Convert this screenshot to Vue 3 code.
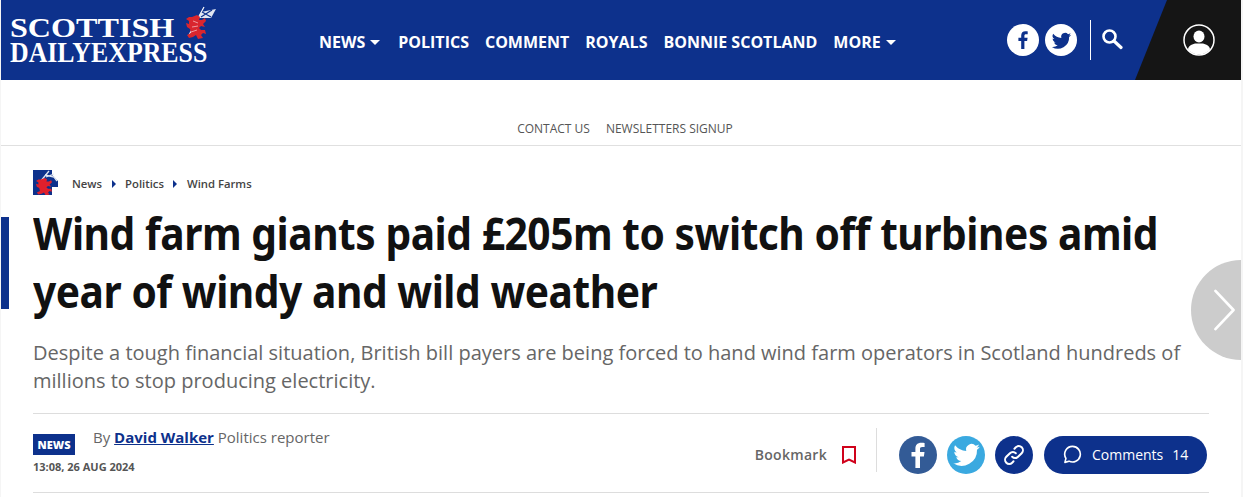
<script setup>
const navItems = [
  { label: 'NEWS', caret: true },
  { label: 'POLITICS' },
  { label: 'COMMENT' },
  { label: 'ROYALS' },
  { label: 'BONNIE SCOTLAND' },
  { label: 'MORE', caret: true }
]
const lion = 'M6 2L11 0 14 2 13 5 16 5 19 3 20 6 17 9 19 12 15 11 13 13 15 15 19 15 20 19 17 18 15 20 17 23 12 24 10 20 7 22 3 23 1 20 5 18 4 14 1 12 0 8 3 9 3 6 0 4 3 2z'
</script>

<template>
  <div class="page">
    <header class="masthead">
      <div class="logo">
        <div class="logo-text">
          <span class="logo-top">SCOTTISH</span>
          <span class="logo-bottom">DAILY EXPRESS</span>
        </div>
        <svg class="logo-lion" viewBox="0 0 34 36" width="34" height="36">
          <path d="M5 32L20 4" stroke="#fff" stroke-width="1.200"/>
          <path d="M17 9L32 6 27 15 14 15z" fill="#dfe5f1"/>
          <path d="M18 9l9 5M28 7l-11 7" stroke="#0d318c" stroke-width="1.200"/>
          <path :d="lion" fill="#d9262e" transform="translate(2 12)"/>
          <path d="M9 18l5 2M8 24l6-1M7 29l6-2" stroke="#f4b8bb" stroke-width=".8"/>
        </svg>
      </div>
      <nav class="nav">
        <a v-for="item in navItems" :key="item.label" class="nav-link">
          {{ item.label }}<i v-if="item.caret" class="caret"></i>
        </a>
      </nav>
      <div class="tools">
        <span class="round-white">
          <svg viewBox="0 0 32 32" width="32" height="32"><path d="M17.400 25v-8h2.700l.5-3.200h-3.200v-2c0-.9.3-1.500 1.600-1.500h1.700V7.400c-.3 0-1.300-.1-2.400-.1-2.500 0-4.100 1.500-4.100 4.200v2.300h-2.800V17h2.800v8z" fill="#0d318c"/></svg>
        </span>
        <span class="round-white">
          <svg viewBox="0 0 24 24" width="21" height="21"><path d="M23 5.500c-.8.400-1.700.6-2.600.7.900-.6 1.600-1.400 2-2.500-.9.500-1.800.9-2.900 1.100A4.500 4.500 0 0 0 11.800 9 12.800 12.800 0 0 1 2.500 4.300a4.500 4.500 0 0 0 1.400 6c-.7 0-1.400-.2-2-.6 0 2.200 1.500 4.100 3.600 4.500-.7.200-1.400.2-2 .1.600 1.800 2.200 3.100 4.200 3.100A9 9 0 0 1 1 19.300 12.800 12.800 0 0 0 20.700 8c.9-.6 1.700-1.500 2.300-2.500z" fill="#0d318c"/></svg>
        </span>
        <span class="divider"></span>
        <svg class="search" viewBox="0 0 22 22" width="22" height="22">
          <circle cx="8.500" cy="8.500" r="6" fill="none" stroke="#fff" stroke-width="2.600"/>
          <path d="M13 13l7 6.500" stroke="#fff" stroke-width="3.200" stroke-linecap="round"/>
        </svg>
      </div>
      <div class="account">
        <svg viewBox="0 0 32 32" width="32" height="32">
          <defs><clipPath id="acc"><circle cx="16" cy="16" r="14.500"/></clipPath></defs>
          <circle cx="16" cy="16" r="15" fill="none" stroke="#fff" stroke-width="1.500"/>
          <g clip-path="url(#acc)" fill="#fff">
            <ellipse cx="16" cy="12.500" rx="5.500" ry="6"/>
            <path d="M5 32v-6c0-4 3-5.500 7-6.500h8c4 1 7 2.500 7 6.500v6z"/>
          </g>
        </svg>
      </div>
    </header>

    <div class="subnav">
      <a>CONTACT US</a>
      <a>NEWSLETTERS SIGNUP</a>
    </div>

    <main class="article">
      <div class="crumbs">
        <svg class="crumb-logo" viewBox="0 0 25 25" width="25" height="25">
          <rect width="25" height="25" fill="#0d318c"/>
          <path d="M19 17h6v8h-6z" fill="#fff"/>
          <path d="M25 0h-6v5l6 6z" fill="#fff"/>
          <path d="M7 12L16 1M12 5l9 2 3 4M13 7l8-3" stroke="#dfe5f1" stroke-width="1.300" fill="none"/>
          <path :d="lion" fill="#e0202c" transform="translate(3 8) scale(.8 .72)"/>
        </svg>
        <a>News</a><i class="tri"></i><a>Politics</a><i class="tri"></i><a>Wind Farms</a>
      </div>

      <h1 class="headline">Wind farm giants paid £205m to switch off turbines amid year of windy and wild weather</h1>
      <p class="standfirst">Despite a tough financial situation, British bill payers are being forced to hand wind farm operators in Scotland hundreds of millions to stop producing electricity.</p>

      <div class="meta">
        <div class="byline-block">
          <div class="byline-row">
            <span class="tag">NEWS</span>
            <span class="byline">By <a class="author">David Walker</a> Politics reporter</span>
          </div>
          <time class="date">13:08, 26 AUG 2024</time>
        </div>
        <div class="actions">
          <span class="bookmark">Bookmark</span>
          <svg class="bookmark-icon" viewBox="0 0 14 18" width="14" height="18">
            <path d="M1 1h12v15.500l-6-3-6 3z" fill="none" stroke="#d0021b" stroke-width="2"/>
          </svg>
          <span class="vrule"></span>
          <span class="share fb">
            <svg viewBox="0 0 38 38" width="38" height="38"><path d="M21 32V20.500h3.900l.6-4.500H21v-2.900c0-1.300.4-2.200 2.200-2.200h2.400V6.900c-.4-.1-1.800-.2-3.400-.2-3.400 0-5.800 2.100-5.800 5.900V16h-3.900v4.500h3.900V32z" fill="#fff"/></svg>
          </span>
          <span class="share tw">
            <svg viewBox="0 0 24 24" width="29" height="29"><path d="M23 5.500c-.8.400-1.700.6-2.600.7.900-.6 1.600-1.400 2-2.500-.9.500-1.800.9-2.900 1.100A4.500 4.500 0 0 0 11.800 9 12.800 12.800 0 0 1 2.500 4.300a4.500 4.500 0 0 0 1.400 6c-.7 0-1.400-.2-2-.6 0 2.200 1.500 4.100 3.600 4.500-.7.200-1.400.2-2 .1.600 1.800 2.200 3.100 4.200 3.100A9 9 0 0 1 1 19.300 12.800 12.800 0 0 0 20.700 8c.9-.6 1.700-1.500 2.300-2.500z" fill="#fff"/></svg>
          </span>
          <span class="share link">
            <svg viewBox="0 0 24 24" width="22" height="22" fill="none" stroke="#fff" stroke-width="2.200" stroke-linecap="round">
              <path d="M10 14a4.500 4.500 0 0 0 6.400 0l4-4a4.500 4.500 0 0 0-6.400-6.400l-1.500 1.500"/>
              <path d="M14 10a4.500 4.500 0 0 0-6.400 0l-4 4a4.500 4.500 0 0 0 6.400 6.400l1.500-1.500"/>
            </svg>
          </span>
          <span class="comments">
            <svg viewBox="0 0 20 20" width="19" height="19" fill="none" stroke="#fff" stroke-width="1.700">
              <path d="M10 1.500a8.200 8.200 0 1 1-3.700 15.500L2 18.300l1.100-4.200A8.200 8.200 0 0 1 10 1.500z" stroke-linejoin="round"/>
            </svg>
            <span class="c-label">Comments</span><span class="c-count">14</span>
          </span>
        </div>
      </div>
      <div class="bottom-rule"></div>
    </main>

    <i class="accent"></i>
    <a class="next">
      <svg viewBox="0 0 24 44" width="24" height="42" fill="none" stroke="#fff" stroke-width="2.800" stroke-linecap="round" stroke-linejoin="round">
        <path d="M3 2l19 20L3 42"/>
      </svg>
    </a>
  </div>
</template>

<style>
html, body { background: #f5f5f5; overflow: hidden; }
</style>

<style scoped>
.page {
  position: relative;
  width: 1240px;
  height: 497px;
  margin-left: 1px;
  background: #fff;
  overflow: hidden;
  font-family: "Open Sans", sans-serif;
  color: #111;
}
.masthead {
  position: relative;
  height: 80px;
  background: #0d318c;
  display: flex;
  align-items: center;
}
.logo { width: 318px; flex: none; position: relative; height: 80px; }
.logo-text { padding: 17px 0 0 9px; font-family: "Liberation Serif", serif; font-weight: 700; color: #fff; }
.logo-top { display: block; font-size: 27px; line-height: 22px; transform: scaleX(1.19); transform-origin: left top; white-space: nowrap; }
.logo-bottom { display: block; margin-top: 1px; font-size: 30px; line-height: 24px; word-spacing: -6px; white-space: nowrap; transform: scaleX(.86); transform-origin: left top; }
.logo-lion { position: absolute; left: 183px; top: 3px; }
.nav { display: flex; gap: 16px; width: 688px; flex: none; padding-top: 4px; }
.nav-link { font-size: 16px; font-weight: 700; color: #fff; line-height: 22px; white-space: nowrap; }
.caret {
  display: inline-block;
  margin: 0 2px 0 5px;
  vertical-align: 3px;
  border-left: 5px solid transparent;
  border-right: 5px solid transparent;
  border-top: 5px solid #fff;
}
.tools { display: flex; align-items: center; gap: 6px; }
.round-white {
  width: 32px; height: 32px; border-radius: 50%; background: #fff;
  display: flex; align-items: center; justify-content: center;
}
.divider { width: 1px; height: 40px; background: #fff; margin: 0 4px 0 7px; }
.search { margin-top: -2px; }
.account {
  position: absolute; right: 0; top: 0; width: 106px; height: 80px;
  background: #151515;
  clip-path: polygon(32px 0, 100% 0, 100% 100%, 0 100%);
  display: flex; align-items: center; justify-content: flex-end;
  box-sizing: border-box;
  padding-right: 26px;
}
.subnav {
  height: 66px;
  box-sizing: border-box;
  padding: 38px 0 0 8px;
  border-bottom: 1px solid #e0e0e0;
  display: flex; justify-content: center; gap: 16px;
  font-size: 12px; line-height: 22px; color: #555;
}
.article { padding: 24px 32px 0 32px; }
.crumbs { display: flex; align-items: center; height: 25px; font-size: 11.300px; font-weight: 600; color: #444; }
.crumbs a { padding-top: 2px; }
.crumb-logo { margin-right: 14px; }
.tri {
  margin: 2px 9.500px 0;
  border-top: 4px solid transparent;
  border-bottom: 4px solid transparent;
  border-left: 4px solid #0d318c;
}
.headline {
  margin: 9px 0 0;
  font-family: "Noto Sans", sans-serif;
  font-size: 44px;
  line-height: 58px;
  font-weight: 700;
  letter-spacing: -.5px;
  color: #111;
  width: 1225px;
  transform: scaleX(.925);
  transform-origin: left top;
}
.standfirst { margin: 19px 0 0; font-size: 20px; line-height: 28px; color: #666; width: 1176px; }
.meta {
  margin-top: 18px;
  border-top: 1px solid #ddd;
  height: 78px;
  width: 1176px;
  display: flex;
  justify-content: space-between;
}
.byline-row { position: relative; height: 40px; }
.tag {
  position: absolute; left: 0; top: 20px;
  width: 42px; height: 21px; background: #0d318c; color: #fff;
  font-size: 11px; font-weight: 800; line-height: 21px; text-align: center;
}
.byline { position: absolute; left: 60px; top: 12px; font-size: 15px; line-height: 22px; color: #666; white-space: nowrap; }
.author { color: #0d318c; font-weight: 700; text-decoration: underline; }
.date { display: block; margin-top: 6px; font-size: 11px; line-height: 14px; font-weight: 700; color: #555; }
.actions { display: flex; align-items: center; margin-right: 2px; height: 80px; padding-top: 1px; box-sizing: border-box; }
.bookmark { font-size: 14px; font-weight: 600; color: #666; letter-spacing: .3px; }
.bookmark-icon { margin-left: 15px; }
.vrule { width: 1px; height: 44px; background: #ddd; margin: -10px 22px 0 20px; }
.share { width: 38px; height: 38px; border-radius: 50%; display: flex; align-items: center; justify-content: center; margin-right: 10px; }
.fb { background: #335b96; }
.tw { background: #3aa9e0; }
.link { background: #0d318c; margin-right: 11px; }
.comments {
  width: 163px; height: 38px; border-radius: 19px; background: #0d318c; color: #fff;
  display: flex; align-items: center; box-sizing: border-box; padding-left: 19px; font-size: 14px;
}
.c-label { margin-left: 10px; }
.c-count { margin-left: 9px; }
.bottom-rule { width: 1176px; height: 1px; background: #ddd; }
.accent { position: absolute; left: 0; top: 217px; width: 8px; height: 92px; background: #0d318c; }
.next {
  position: absolute; right: -50px; top: 260px; width: 100px; height: 100px; border-radius: 50%;
  background: #ccc;
}
.next svg { position: absolute; left: 21px; top: 29px; }
</style>
